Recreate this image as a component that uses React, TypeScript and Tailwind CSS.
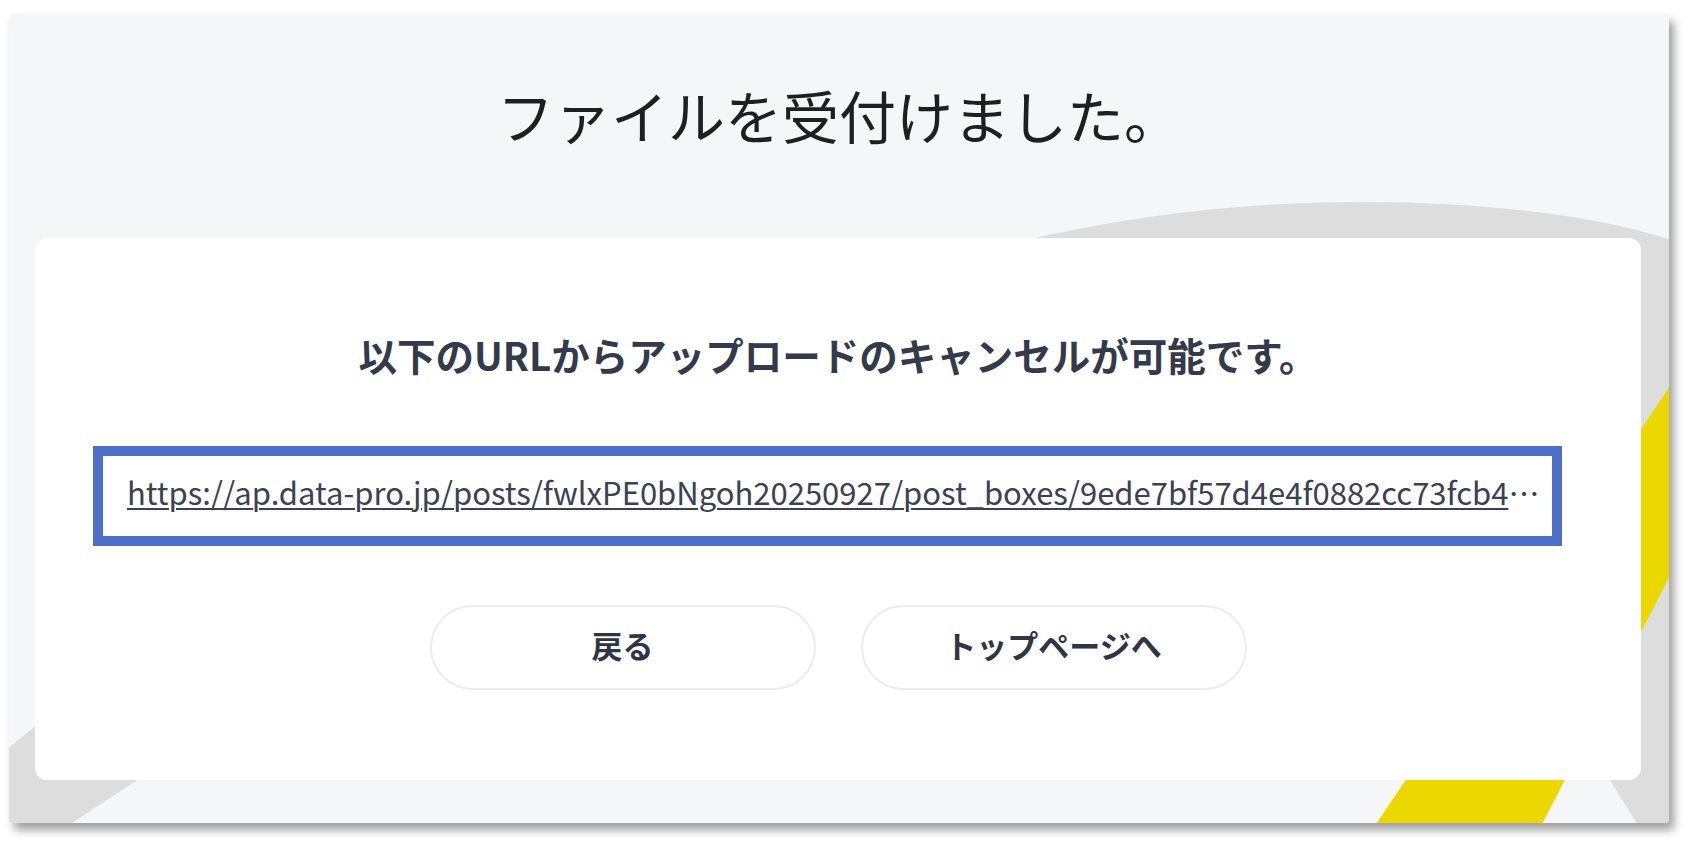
import React from "react";

const URL_TEXT =
  "https://ap.data-pro.jp/posts/fwlxPE0bNgoh20250927/post_boxes/9ede7bf57d4e4f0882cc73fcb4a1e6d2/cancel";

function Background() {
  return (
    <svg
      className="absolute inset-0"
      width="1660"
      height="809"
      viewBox="0 0 1660 809"
      aria-hidden="true"
    >
      <path
        d="M 960 240 C 1100 203 1230 188 1350 188 C 1491 188 1611 204 1691 236 L 1711 886 L 1676 886 L 1488 586 L 891 586 Z"
        fill="#dcdddc"
      />
      <polygon points="-19,749 391,417 391,593 -19,863" fill="#dcdddc" />
      <polygon points="1719,286 1803,286 1494,886 1316,886" fill="#ebd800" />
    </svg>
  );
}

export default function App() {
  return (
    <div className="min-h-screen w-[1700px] h-[857px] bg-white font-['Noto_Sans_CJK_JP','Noto_Sans',sans-serif] overflow-hidden">
      <div className="pl-[9px] pt-[14px]">
        <div className="relative w-[1660px] h-[809px] overflow-hidden rounded-[4px] bg-[#f5f6f8] shadow-[5px_7px_10px_rgba(0,0,0,0.38)]">
          <Background />
          <div className="relative flex flex-col">
            <h1 className="mt-[58px] text-center text-[57px] leading-[84px] font-normal text-[#1f1f1f]">
              ファイルを受付けました。
            </h1>
            <div className="mt-[82px] ml-[26px] w-[1606px] h-[542px] rounded-[12px] bg-white flex flex-col items-center pt-[89px]">
              <p className="text-[38.5px] leading-[54px] font-bold text-[#333a4c]">
                以下のURLからアップロードのキャンセルが可能です。
              </p>
              <div className="mt-[65px] self-start ml-[58px] w-[1469px] h-[100px] border-[10px] border-[#4f70c7] bg-white">
                <p className="truncate pl-[24px] pr-[8px] text-[31px] leading-[71px] text-[#3a4154]">
                  <a
                    href="#"
                    className="underline decoration-[2px] underline-offset-[3px]"
                  >
                    {URL_TEXT}
                  </a>
                </p>
              </div>
              <div className="mt-[59px] flex gap-[45px]">
                <button className="w-[386px] h-[85px] pb-[5px] rounded-full border-2 border-[#ececec] bg-white text-[31px] font-bold text-[#2f3546]">
                  戻る
                </button>
                <button className="w-[386px] h-[85px] pb-[5px] rounded-full border-2 border-[#ececec] bg-white text-[31px] font-bold text-[#2f3546]">
                  トップページへ
                </button>
              </div>
            </div>
          </div>
        </div>
      </div>
    </div>
  );
}
